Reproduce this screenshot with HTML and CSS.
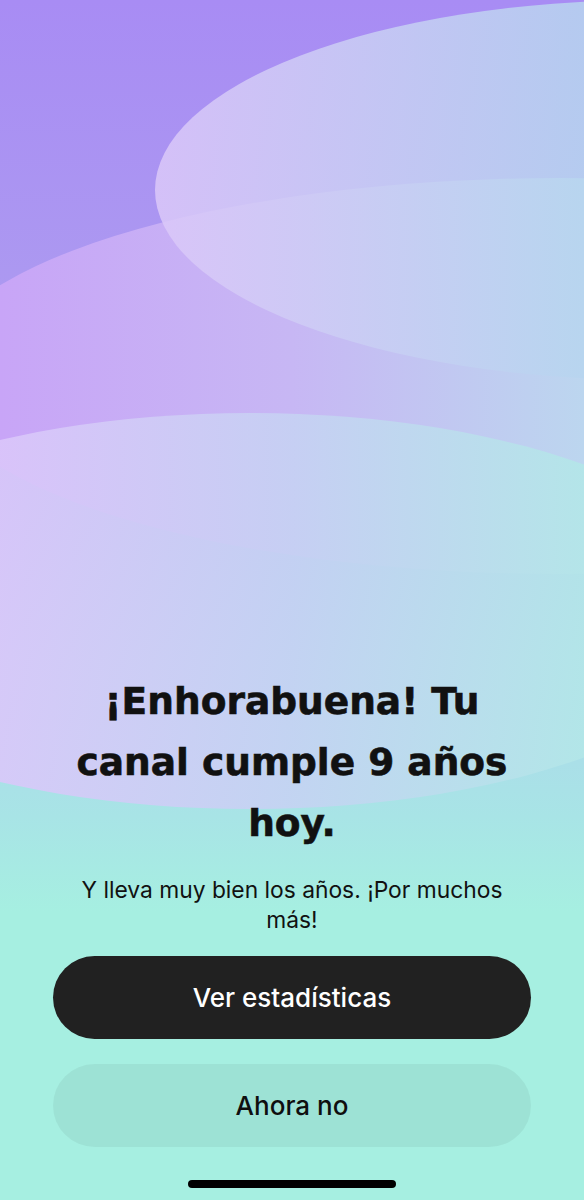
FILE: index.html
```html
<!DOCTYPE html>
<html lang="es">
<head>
  <meta charset="UTF-8"/>
  <meta name="viewport" content="width=device-width, initial-scale=1.0"/>
  <title>Aniversario del canal</title>
  <link rel="stylesheet" href="styles.css">
</head>
<body>

  <svg class="backdrop" viewBox="0 0 584 1200" preserveAspectRatio="none" aria-hidden="true">
    <defs>
      <linearGradient id="baseFill" x1="0" y1="0" x2="0" y2="1200" gradientUnits="userSpaceOnUse">
        <stop offset="0" stop-color="#a88cf4"/>
        <stop offset="0.3" stop-color="#ad9cf0"/>
        <stop offset="0.55" stop-color="#aed6ec"/>
        <stop offset="0.68" stop-color="#a8e4e6"/>
        <stop offset="0.76" stop-color="#a6efe1"/>
        <stop offset="1" stop-color="#a6efe1"/>
      </linearGradient>
      <linearGradient id="waveTop" x1="150" y1="0" x2="584" y2="0" gradientUnits="userSpaceOnUse">
        <stop offset="0" stop-color="#dcc8f9"/>
        <stop offset="1" stop-color="#b7d5ef"/>
      </linearGradient>
      <linearGradient id="waveMid" x1="0" y1="0" x2="584" y2="0" gradientUnits="userSpaceOnUse">
        <stop offset="0" stop-color="#c8a5f7"/>
        <stop offset="0.5" stop-color="#c7b7f4"/>
        <stop offset="1" stop-color="#bcd6ef"/>
      </linearGradient>
      <linearGradient id="waveLow" x1="0" y1="0" x2="584" y2="0" gradientUnits="userSpaceOnUse">
        <stop offset="0" stop-color="#dbc7fa"/>
        <stop offset="0.5" stop-color="#c6d2f3"/>
        <stop offset="1" stop-color="#b3e7e8"/>
      </linearGradient>
    </defs>
    <rect width="584" height="1200" fill="url(#baseFill)"/>
    <ellipse cx="560" cy="376" rx="630" ry="198" fill="url(#waveMid)"/>
    <ellipse cx="650" cy="190" rx="495" ry="190" fill="url(#waveTop)" opacity="0.85"/>
    <ellipse cx="250" cy="611" rx="496" ry="198" fill="url(#waveLow)" opacity="0.88"/>
  </svg>

  <main class="sheet">
    <h1 class="title">¡Enhorabuena! Tu canal cumple 9 años hoy.</h1>
    <p class="subtitle">Y lleva muy bien los años. ¡Por muchos más!</p>

    <div class="actions">
      <button class="btn btn-primary">Ver estadísticas</button>
      <button class="btn btn-secondary">Ahora no</button>
    </div>

    <div class="home-indicator"></div>
  </main>

</body>
</html>
```

FILE: styles.css
```css
:root {
  --ink: #0f0f0f;
  --mint: #a6efe1;
  --button-dark: #212121;
  --button-soft: rgba(0, 0, 0, 0.05);
}

body {
  margin: 0;
  padding: 0;
  min-height: 1200px;
  font-family: 'Inter', 'Noto Sans', sans-serif;
  background-color: var(--mint);
  color: var(--ink);
  display: flex;
  flex-direction: column;
  justify-content: flex-end;
  position: relative;
  overflow: hidden;
}

.backdrop {
  position: absolute;
  top: 0;
  left: 0;
  width: 100%;
  height: 100%;
  z-index: 0;
}

.sheet {
  position: relative;
  z-index: 1;
  display: flex;
  flex-direction: column;
  align-items: center;
  padding: 0 53px 12px;
}

.title {
  margin: 0;
  max-width: 460px;
  font-family: 'DejaVu Sans', sans-serif;
  font-size: 37.5px;
  font-weight: 700;
  line-height: 61px;
  text-align: center;
  color: #111;
  -webkit-text-stroke: 0.6px #111;
}

.subtitle {
  margin: 21px 0 0;
  max-width: 460px;
  font-size: 22.8px;
  line-height: 30px;
  text-align: center;
  color: #111;
}

.actions {
  display: flex;
  flex-direction: column;
  gap: 25px;
  width: 100%;
  margin-top: 21px;
}

.btn {
  height: 83px;
  border: none;
  border-radius: 42px;
  font-family: 'Inter', sans-serif;
  font-size: 26px;
  font-weight: 500;
  cursor: pointer;
}

.btn-primary {
  background-color: var(--button-dark);
  color: #fff;
}

.btn-secondary {
  background-color: var(--button-soft);
  color: var(--ink);
}

.home-indicator {
  width: 208px;
  height: 8px;
  margin-top: 33px;
  border-radius: 4px;
  background-color: #000;
}
```
